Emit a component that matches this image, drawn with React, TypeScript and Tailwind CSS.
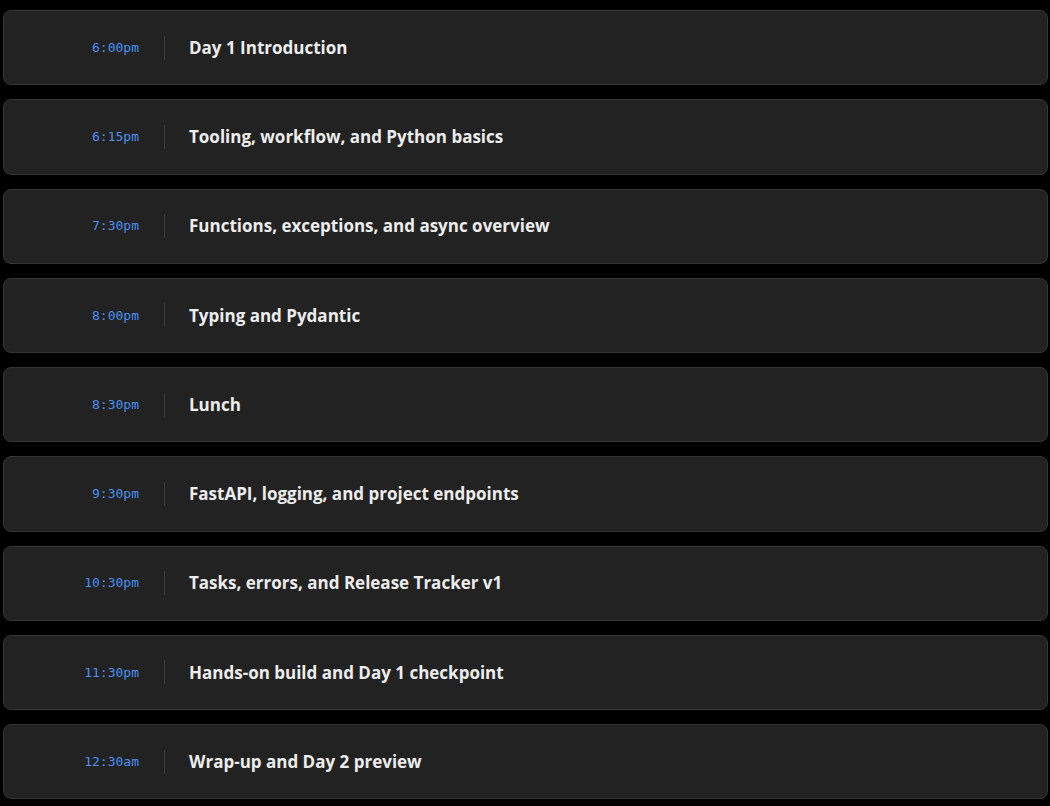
const items = [
  { time: "6:00pm", title: "Day 1 Introduction" },
  { time: "6:15pm", title: "Tooling, workflow, and Python basics" },
  { time: "7:30pm", title: "Functions, exceptions, and async overview" },
  { time: "8:00pm", title: "Typing and Pydantic" },
  { time: "8:30pm", title: "Lunch" },
  { time: "9:30pm", title: "FastAPI, logging, and project endpoints" },
  { time: "10:30pm", title: "Tasks, errors, and Release Tracker v1" },
  { time: "11:30pm", title: "Hands-on build and Day 1 checkpoint" },
  { time: "12:30am", title: "Wrap-up and Day 2 preview" },
];

function ScheduleRow({ time, title }: { time: string; title: string }) {
  return (
    <div className="flex items-center h-[75.25px] rounded-lg border border-[#353535] bg-[#222222]">
      <div className="w-[135px] text-right text-[13px] text-[#4b8ff0] font-['DejaVu_Sans_Mono',monospace]">
        {time}
      </div>
      <div className="ml-[25px] mr-6 w-px h-6 bg-[#3a3a3a]"></div>
      <div className="text-[17px] font-bold text-[#ededed] font-['Open_Sans',sans-serif]">
        {title}
      </div>
    </div>
  );
}

export default function App() {
  return (
    <div className="min-h-[806px] bg-black pt-[10px] pl-[3px] pr-[2px]">
      <div className="flex flex-col gap-[14px]">
        {items.map((it) => (
          <ScheduleRow key={it.time} time={it.time} title={it.title} />
        ))}
      </div>
    </div>
  );
}
